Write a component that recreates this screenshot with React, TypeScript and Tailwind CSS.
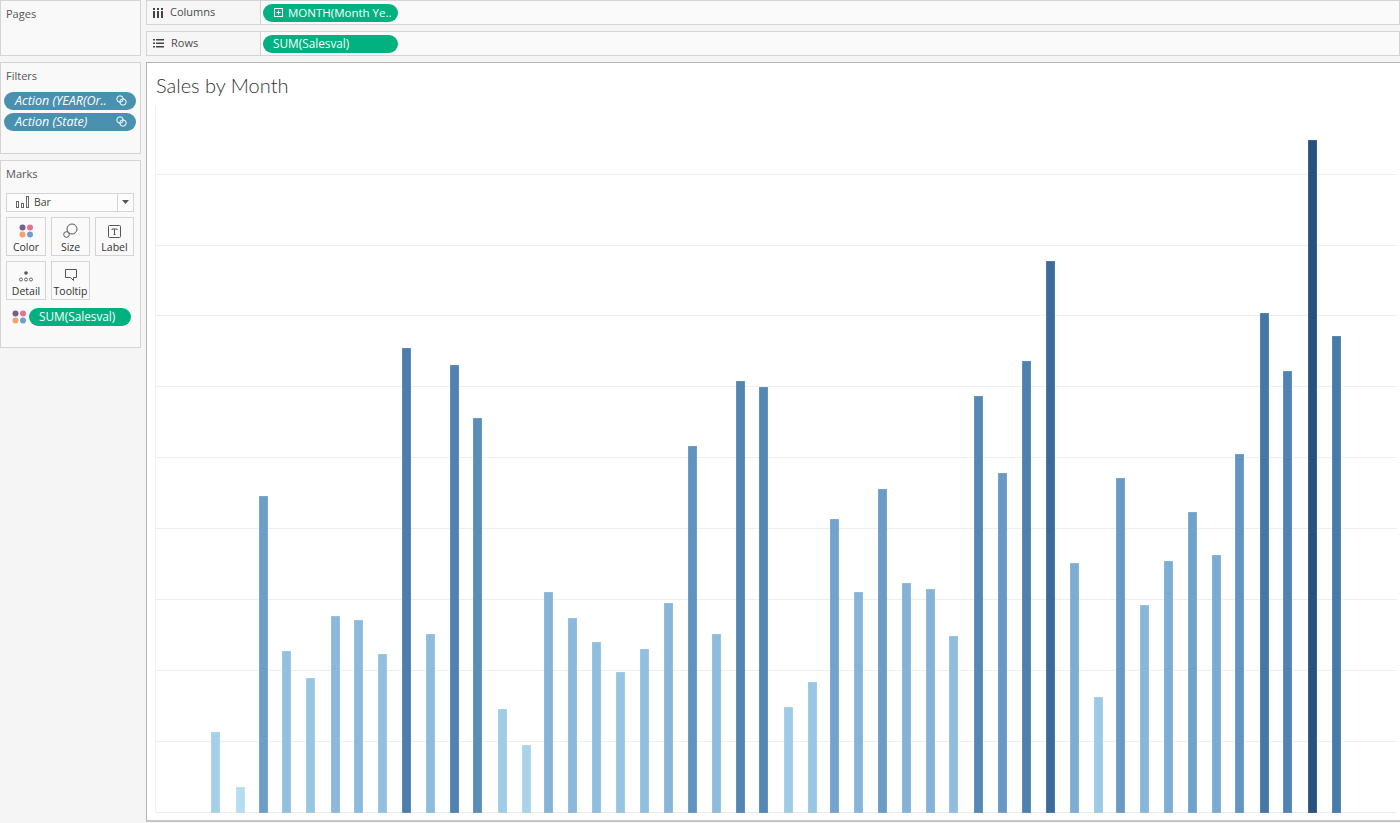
const BARS: [number, number][] = [
  [211, 732], [236, 787], [259, 496], [282, 651], [306, 678], [331, 616], [354, 620], [378, 654],
  [402, 348], [426, 634], [450, 365], [473, 418], [498, 709], [522, 745], [544, 592], [568, 618],
  [592, 642], [616, 672], [640, 649], [664, 603], [688, 446], [712, 634], [736, 381], [759, 387],
  [784, 707], [808, 682], [830, 519], [854, 592], [878, 489], [902, 583], [926, 589], [949, 636],
  [974, 396], [998, 473], [1022, 361], [1046, 261], [1070, 563], [1094, 697], [1116, 478], [1140, 605],
  [1164, 561], [1188, 512], [1212, 555], [1235, 454], [1260, 313], [1283, 371], [1308, 140], [1332, 336],
];

const GRID_Y = [174, 245, 315, 386, 457, 528, 599, 670, 741];

// colour ramp stops: [bar height, r, g, b]
const RAMP = [
  [25, 181, 220, 240],
  [120, 155, 200, 228],
  [220, 133, 180, 216],
  [320, 108, 157, 199],
  [460, 76, 127, 174],
  [560, 58, 105, 152],
  [672, 38, 82, 128],
];

function barColor(h: number) {
  for (let i = 1; i < RAMP.length; i++) {
    if (h <= RAMP[i][0]) {
      const a = RAMP[i - 1];
      const b = RAMP[i];
      const t = (h - a[0]) / (b[0] - a[0]);
      return `rgb(${a[1] + (b[1] - a[1]) * t},${a[2] + (b[2] - a[2]) * t},${a[3] + (b[3] - a[3]) * t})`;
    }
  }
  return "rgb(38,82,128)";
}

function ColorDots({ className }: { className?: string }) {
  return (
    <svg width="15" height="14" viewBox="0 0 15 14" className={className}>
      <circle cx="3.5" cy="3.5" r="3" fill="#76608a" />
      <circle cx="11" cy="3.5" r="3" fill="#e8718d" />
      <circle cx="3.5" cy="10.5" r="3" fill="#f2a36e" />
      <circle cx="11" cy="10.5" r="3" fill="#6f9fd0" />
    </svg>
  );
}

function LinkIcon() {
  return (
    <svg width="11" height="11" viewBox="0 0 11 11" fill="none" stroke="white" strokeWidth="1">
      <circle cx="4" cy="4" r="3.2" />
      <circle cx="7" cy="7" r="3.2" />
    </svg>
  );
}

function Pill({ children, className }: { children: React.ReactNode; className: string }) {
  return (
    <div className={`flex h-[18px] items-center rounded-full text-white ${className}`}>{children}</div>
  );
}

function Shelf({ icon, label, children }: { icon: React.ReactNode; label: string; children: React.ReactNode }) {
  return (
    <div className="flex h-[25px] border border-[#d4d4d4] bg-[#fafafa]">
      <div className="flex w-[114px] items-center gap-[7px] border-r border-[#d4d4d4] bg-[#f6f6f6] pl-[6px] text-[#4a4a4a]">
        {icon}
        <span className="text-[11px]">{label}</span>
      </div>
      <div className="flex items-center pl-[2px]">{children}</div>
    </div>
  );
}

function MarkButton({ icon, label }: { icon: React.ReactNode; label: string }) {
  return (
    <div className="flex h-[39px] flex-col items-center border border-[#d4d4d4] bg-[#fafafa]">
      <div className="flex h-[21px] items-end pb-[1px]">{icon}</div>
      <span className="mt-[2px] text-[10.5px] leading-[13px] text-[#333]">{label}</span>
    </div>
  );
}

export default function App() {
  return (
    <div className="flex h-[823px] w-[1400px] gap-[5px] overflow-hidden bg-[#f5f5f5] font-['Open_Sans','Liberation_Sans',sans-serif]">
      {/* Left cards */}
      <div className="flex w-[141px] shrink-0 flex-col gap-[6px]">
        <div className="h-[56px] border border-[#d4d4d4] bg-[#f9f9f9] pl-[5px] pt-[5px] text-[11px] text-[#555]">Pages</div>

        <div className="h-[92px] border border-[#d4d4d4] bg-[#f9f9f9]">
          <div className="pl-[5px] pt-[5px] text-[11px] text-[#555]">Filters</div>
          <div className="mt-[7px] flex flex-col gap-[3px] pl-[3px]">
            <Pill className="w-[132px] justify-between bg-[#4a91b0] pl-[11px] pr-[9px] text-[12.5px] font-medium italic">
              <span className="pt-[2px]">Action (YEAR(Or..</span>
              <LinkIcon />
            </Pill>
            <Pill className="w-[132px] justify-between bg-[#4a91b0] pl-[11px] pr-[9px] text-[12.5px] font-medium italic">
              <span className="pt-[2px]">Action (State)</span>
              <LinkIcon />
            </Pill>
          </div>
        </div>

        <div className="h-[188px] border border-[#d4d4d4] bg-[#f9f9f9]">
          <div className="pl-[5px] pt-[5px] text-[11px] text-[#555]">Marks</div>
          <div className="ml-[5px] mt-[10px] flex h-[19px] w-[128px] items-center border border-[#d4d4d4] bg-[#fcfcfc]">
            <div className="flex flex-1 items-center gap-[4px] pl-[9px]">
              <svg width="14" height="12" viewBox="0 0 14 12" fill="none" stroke="#666" strokeWidth="1">
                <rect x="0.5" y="5.5" width="2" height="6" />
                <rect x="5.5" y="7.5" width="2" height="4" />
                <rect x="10.5" y="0.5" width="2" height="11" />
              </svg>
              <span className="pt-[1px] text-[10.5px] text-[#444]">Bar</span>
            </div>
            <div className="flex h-full w-[16px] items-center justify-center border-l border-[#d4d4d4]">
              <svg width="7" height="4" viewBox="0 0 7 4"><path d="M0 0h7L3.5 4z" fill="#555" /></svg>
            </div>
          </div>
          <div className="ml-[5px] mt-[5px] grid w-[128px] grid-cols-[40px_39px_39px] gap-x-[5px] gap-y-[5px]">
            <MarkButton icon={<ColorDots />} label="Color" />
            <MarkButton
              icon={
                <svg width="15" height="15" viewBox="0 0 15 15" fill="none" stroke="#555" strokeWidth="1">
                  <circle cx="9" cy="6" r="5" />
                  <circle cx="3.5" cy="11.5" r="2.8" fill="#fafafa" />
                </svg>
              }
              label="Size"
            />
            <MarkButton
              icon={
                <svg width="13" height="13" viewBox="0 0 13 13" fill="none" stroke="#555" strokeWidth="1">
                  <rect x="0.5" y="0.5" width="12" height="12" rx="1" />
                  <path d="M4 4h5M6.5 4v5.5M5.5 9.5h2M4 4v1M9 4v1" />
                </svg>
              }
              label="Label"
            />
            <MarkButton
              icon={
                <svg width="14" height="11" viewBox="0 0 14 11" fill="none" stroke="#555" strokeWidth="0.9">
                  <circle cx="7" cy="2" r="1.8" fill="#555" stroke="none" />
                  <circle cx="2" cy="8.5" r="1.5" />
                  <circle cx="7" cy="8.5" r="1.5" />
                  <circle cx="12" cy="8.5" r="1.5" />
                </svg>
              }
              label="Detail"
            />
            <MarkButton
              icon={
                <svg width="14" height="14" viewBox="0 0 14 14" fill="none" stroke="#555" strokeWidth="1">
                  <path d="M1.5 1.500h11v8h-3v3l-3-3h-5z" strokeLinejoin="round" />
                </svg>
              }
              label="Tooltip"
            />
          </div>
          <div className="ml-[11px] mt-[8px] flex items-center gap-[2px]">
            <ColorDots />
            <Pill className="w-[102px] bg-[#02b180] pl-[10px] text-[11.8px]">SUM(Salesval)</Pill>
          </div>
        </div>
      </div>

      {/* Shelves and view */}
      <div className="flex flex-1 flex-col gap-[6px]">
        <Shelf
          label="Columns"
          icon={
            <svg width="10" height="10" viewBox="0 0 10 10" fill="#444">
              <rect x="0" y="3" width="2" height="7" />
              <rect x="4" y="3" width="2" height="7" />
              <rect x="8" y="3" width="2" height="7" />
              <rect x="0" y="0" width="2" height="2" />
              <rect x="4" y="0" width="2" height="2" />
              <rect x="8" y="0" width="2" height="2" />
            </svg>
          }
        >
          <Pill className="w-[135px] gap-[5px] bg-[#02b180] pl-[11px] text-[11.5px]">
            <svg width="9" height="9" viewBox="0 0 9 9" fill="none" stroke="white" strokeWidth="1">
              <rect x="0.500" y="0.500" width="8" height="8" />
              <path d="M2.500 4.500h4M4.500 2.500v4" />
            </svg>
            <span>MONTH(Month Ye..</span>
          </Pill>
        </Shelf>
        <Shelf
          label="Rows"
          icon={
            <svg width="11" height="9" viewBox="0 0 11 9" fill="#444">
              <rect x="0" y="0" width="2" height="1.500" />
              <rect x="3" y="0" width="8" height="1.500" />
              <rect x="0" y="3.500" width="2" height="1.500" />
              <rect x="3" y="3.500" width="8" height="1.500" />
              <rect x="0" y="7" width="2" height="1.500" />
              <rect x="3" y="7" width="8" height="1.500" />
            </svg>
          }
        >
          <Pill className="w-[135px] bg-[#02b180] pl-[10px] text-[11.8px]">SUM(Salesval)</Pill>
        </Shelf>

        <div className="flex h-[760px] flex-col border border-b-2 border-r-0 border-[#b4b4b4] border-b-[#c6c6c6] bg-white">
          <div className="pl-[9px] pt-[9px] font-['Lato',sans-serif] text-[20px] font-light leading-[27px] text-[#333]">Sales by Month</div>
          {/* plot */}
          <svg width="1253" height="710" viewBox="147 106 1253 710" className="mt-[7px] block">
            <line x1="155.500" y1="106" x2="155.500" y2="812" stroke="#f0f0f0" />
            {GRID_Y.map((y) => (
              <line key={y} x1="156" x2="1397" y1={y + 0.5} y2={y + 0.5} stroke="#efefef" />
            ))}
            <line x1="156" x2="1397" y1="812.500" y2="812.500" stroke="#ededed" />
            {BARS.map(([x, top]) => (
              <rect
                key={x}
                x={x + 0.5}
                y={top + 0.5}
                width="8"
                height={812 - top}
                fill={barColor(812 - top)}
                stroke={barColor(812 - top)}
                strokeOpacity="0.8"
              />
            ))}
          </svg>
        </div>
      </div>
    </div>
  );
}
